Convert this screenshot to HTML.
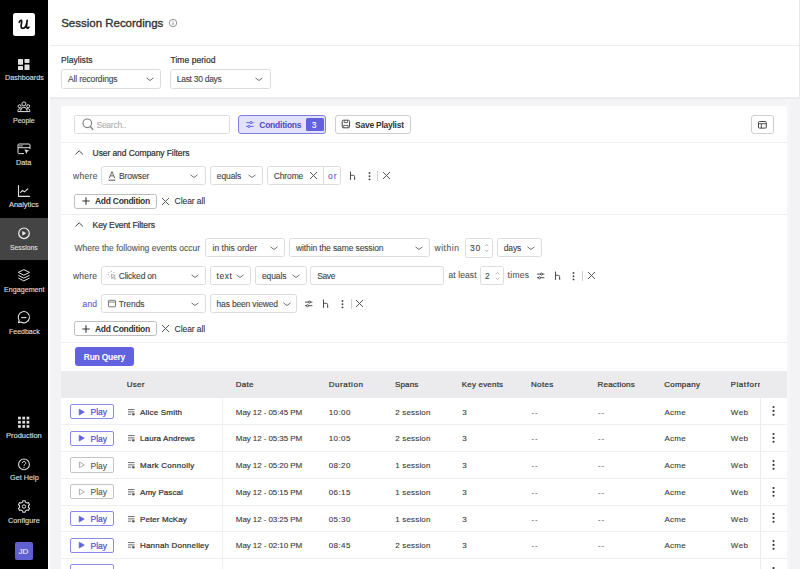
<!DOCTYPE html>
<html><head><meta charset="utf-8"><style>
html,body{margin:0;padding:0;width:800px;height:569px;overflow:hidden;background:#fff}
body{position:relative;font-family:"Liberation Sans", sans-serif}
</style></head><body>
<div style="position:absolute;left:0px;top:0px;width:48px;height:569px;background:#000"></div>
<div style="position:absolute;left:48px;top:0px;width:1.5px;height:569px;background:#fff"></div>
<div style="position:absolute;left:13px;top:13px;width:22px;height:22.5px;background:#fff;border-radius:2.5px"></div>
<svg style="position:absolute;left:13px;top:13px;overflow:visible" width="22" height="22" viewBox="0 0 22 22"><path d="M6.2,9.3 Q7,7.2 8.4,7.4 Q8.9,7.5 8.7,9 L8.1,12.6 Q7.8,15.3 10.2,15.3 Q12.6,15.2 13.6,10.8 L14.2,7.4 L13.6,12.8 Q13.4,15.2 14.6,15.1 Q15.4,15 15.9,14.2" fill="none" stroke="#111" stroke-width="1.65" stroke-linecap="round" stroke-linejoin="round"/></svg>
<div style="position:absolute;left:0px;top:218px;width:47.6px;height:42px;background:#444"></div>
<svg style="position:absolute;left:14px;top:55px;overflow:visible" width="20" height="20" viewBox="0 0 20 20"><g fill="#e2e2e2"><rect x="4" y="3.9" width="5" height="5.9" rx="0.6"/><rect x="10.5" y="3.9" width="5" height="4" rx="0.6"/><rect x="4" y="11" width="5" height="4" rx="0.6"/><rect x="10.5" y="9.5" width="5" height="5.5" rx="0.6"/></g></svg>
<svg style="position:absolute;left:14px;top:98px;overflow:visible" width="20" height="20" viewBox="0 0 20 20"><g fill="none" stroke="#e2e2e2" stroke-width="1"><circle cx="9.9" cy="5.9" r="2"/><circle cx="5.6" cy="8.2" r="1.5"/><circle cx="14.2" cy="8.2" r="1.5"/><path d="M6.8,13.6 v-1.2 a3.1,3.1 0 0 1 6.2,0 v1.2"/><path d="M3.9,13.6 v-1.1 a1.9,1.9 0 0 1 2.9,-1.5"/><path d="M15.9,13.6 v-1.1 a1.9,1.9 0 0 0 -2.9,-1.5"/><path d="M3.9,13.6 H15.9"/></g></svg>
<svg style="position:absolute;left:14px;top:140px;overflow:visible" width="20" height="20" viewBox="0 0 20 20"><g fill="none" stroke="#e2e2e2" stroke-width="1"><path d="M10,13.6 H5 a1,1 0 0 1 -1,-1 V5 a1,1 0 0 1 1,-1 H15 a1,1 0 0 1 1,1 V9"/><path d="M4,7.7 H16"/></g><g fill="#e2e2e2"><rect x="5.3" y="5.3" width="1.3" height="1.2"/><rect x="7.2" y="5.3" width="1.3" height="1.2"/><path d="M10.5,9.3 L15.6,10.8 L13.3,11.6 L12.4,13.9 Z"/></g></svg>
<svg style="position:absolute;left:14px;top:182px;overflow:visible" width="20" height="20" viewBox="0 0 20 20"><g fill="none" stroke="#e2e2e2" stroke-width="1.1" stroke-linecap="round" stroke-linejoin="round"><path d="M4.5,3.5 V14.4 H15.5"/><path d="M6.6,10.4 L8.6,8.4 L10.4,9.9 L13.8,6.8"/></g></svg>
<svg style="position:absolute;left:14px;top:224px;overflow:visible" width="20" height="20" viewBox="0 0 20 20"><circle cx="10" cy="9.3" r="5.3" fill="none" stroke="#f2f2f2" stroke-width="1.2"/><path d="M8.4,7.1 L12.1,9.3 L8.4,11.6 Z" fill="#f2f2f2"/></svg>
<svg style="position:absolute;left:14px;top:266px;overflow:visible" width="20" height="20" viewBox="0 0 20 20"><g fill="none" stroke="#e2e2e2" stroke-width="1" stroke-linejoin="round"><path d="M4.3,6.4 L9.8,3.6 L15.5,6.4 L9.8,9.2 Z"/><path d="M4.3,9.3 L9.8,12.1 L15.5,9.3"/><path d="M4.3,12 L9.8,14.9 L15.5,12"/></g></svg>
<svg style="position:absolute;left:14px;top:308px;overflow:visible" width="20" height="20" viewBox="0 0 20 20"><g fill="none" stroke="#e2e2e2" stroke-width="1.1"><path d="M4.4,14.6 L5.2,12.3 A5.6,5.6 0 1 1 7,14 Z" stroke-linejoin="round"/><path d="M7.2,9.6 H12.4"/></g></svg>
<svg style="position:absolute;left:14px;top:413px;overflow:visible" width="20" height="20" viewBox="0 0 20 20"><g fill="#e2e2e2"><rect x="4.10" y="3.70" width="2.7" height="2.7"/><rect x="8.35" y="3.70" width="2.7" height="2.7"/><rect x="12.60" y="3.70" width="2.7" height="2.7"/><rect x="4.10" y="7.90" width="2.7" height="2.7"/><rect x="8.35" y="7.90" width="2.7" height="2.7"/><rect x="12.60" y="7.90" width="2.7" height="2.7"/><rect x="4.10" y="12.10" width="2.7" height="2.7"/><rect x="8.35" y="12.10" width="2.7" height="2.7"/><rect x="12.60" y="12.10" width="2.7" height="2.7"/></g></svg>
<svg style="position:absolute;left:14px;top:455px;overflow:visible" width="20" height="20" viewBox="0 0 20 20"><circle cx="10" cy="9.4" r="5.4" fill="none" stroke="#e2e2e2" stroke-width="1.05"/><path d="M8.3,8.1 a1.7,1.7 0 1 1 2.5,1.5 c-0.6,0.3 -0.8,0.6 -0.8,1.3" fill="none" stroke="#e2e2e2" stroke-width="1"/><circle cx="10" cy="12.4" r="0.6" fill="#e2e2e2"/></svg>
<svg style="position:absolute;left:14px;top:496px;overflow:visible" width="20" height="20" viewBox="0 0 20 20"><path d="M7.75,6.60 L8.66,6.10 L8.77,4.73 L11.23,4.73 L11.34,6.10 L12.25,6.60 L13.14,7.14 L14.38,6.55 L15.61,8.68 L14.48,9.47 L14.50,10.50 L14.48,11.53 L15.61,12.32 L14.38,14.45 L13.14,13.86 L12.25,14.40 L11.34,14.90 L11.23,16.27 L8.77,16.27 L8.66,14.90 L7.75,14.40 L6.86,13.86 L5.62,14.45 L4.39,12.32 L5.52,11.53 L5.50,10.50 L5.52,9.47 L4.39,8.68 L5.62,6.55 L6.86,7.14 Z" fill="none" stroke="#e2e2e2" stroke-width="1.05" stroke-linejoin="round"/><circle cx="10" cy="10.5" r="1.7" fill="none" stroke="#e2e2e2" stroke-width="1"/></svg>
<div style="position:absolute;left:15px;top:542px;width:18px;height:18px;background:#6060d0;border-radius:2px"></div>
<div style="position:absolute;left:49.5px;top:0px;width:750.5px;height:97.4px;background:#fff"></div>
<div style="position:absolute;left:49.5px;top:45px;width:750.5px;height:1px;background:#efefef"></div>
<div style="position:absolute;left:799px;top:0px;width:1px;height:97.4px;background:#e9e9e9"></div>
<div style="position:absolute;left:49.5px;top:97.4px;width:750.5px;height:471.6px;background:#f3f3f5"></div>
<svg style="position:absolute;left:168px;top:18px;overflow:visible" width="10" height="10" viewBox="0 0 10 10"><circle cx="5" cy="5" r="3.7" fill="none" stroke="#777" stroke-width="0.8"/><path d="M5,4.3 V7.2" stroke="#777" stroke-width="0.9"/><circle cx="5" cy="3.1" r="0.5" fill="#777"/></svg>
<div style="position:absolute;left:60.5px;top:69.0px;width:100.5px;height:19.5px;box-sizing:border-box;border:1px solid #dcdcdc;border-radius:2.5px;background:#fff"></div>
<svg style="position:absolute;left:146px;top:77.05px;overflow:visible" width="8" height="5" viewBox="0 0 8 5"><path d="M0.5,0.9 L4,3.5 L7.5,0.9" fill="none" stroke="#707070" stroke-width="1"/></svg>
<div style="position:absolute;left:170.0px;top:69.0px;width:100.5px;height:19.5px;box-sizing:border-box;border:1px solid #dcdcdc;border-radius:2.5px;background:#fff"></div>
<svg style="position:absolute;left:255px;top:77.05px;overflow:visible" width="8" height="5" viewBox="0 0 8 5"><path d="M0.5,0.9 L4,3.5 L7.5,0.9" fill="none" stroke="#707070" stroke-width="1"/></svg>
<div style="position:absolute;left:61.1px;top:106.0px;width:725.9px;height:494.0px;background:#fff;border-radius:3px"></div>
<div style="position:absolute;left:74.0px;top:114.5px;width:156.0px;height:19.599999999999994px;box-sizing:border-box;border:1px solid #dcdcdc;border-radius:2.5px;background:#fff"></div>
<svg style="position:absolute;left:81px;top:117px;overflow:visible" width="14" height="14" viewBox="0 0 14 14"><circle cx="6.3" cy="6.3" r="4.3" fill="none" stroke="#808080" stroke-width="1.15"/><path d="M9.4,9.5 L11.9,12.5" stroke="#808080" stroke-width="1.2" stroke-linecap="round"/></svg>
<div style="position:absolute;left:238.25px;top:114.5px;width:88.0px;height:19.75px;box-sizing:border-box;border:1px solid #7d7de6;border-radius:3px;background:#e2e2fa"></div>
<svg style="position:absolute;left:245px;top:117.7px;overflow:visible" width="10" height="12" viewBox="0 0 10 12"><g stroke="#6262e0" stroke-width="1" fill="none"><path d="M1.3,4.6 H8.6"/><path d="M1.3,8.4 H8.6"/><circle cx="6" cy="4.6" r="1.1" fill="#e2e2fa"/><circle cx="3.9" cy="8.4" r="1.1" fill="#e2e2fa"/></g></svg>
<div style="position:absolute;left:305.5px;top:117.5px;width:18.25px;height:13.75px;background:#6262e0;border-radius:1.5px"></div>
<div style="position:absolute;left:334.5px;top:114.5px;width:76.5px;height:19.75px;box-sizing:border-box;border:1px solid #cfcfcf;border-radius:3px;background:#fff"></div>
<svg style="position:absolute;left:341px;top:119px;overflow:visible" width="10" height="10" viewBox="0 0 10 10"><rect x="1.2" y="1.2" width="7.4" height="7.6" rx="1.2" fill="none" stroke="#444" stroke-width="1"/><path d="M3.2,1.4 V3.6 H6.6 V1.4" fill="none" stroke="#444" stroke-width="0.8"/><path d="M2.6,8.6 V6.4 H7.2 V8.6" fill="none" stroke="#444" stroke-width="0.8"/></svg>
<div style="position:absolute;left:750.8px;top:114.5px;width:23.200000000000045px;height:19.80000000000001px;box-sizing:border-box;border:1px solid #cfcfcf;border-radius:3px;background:#fff"></div>
<svg style="position:absolute;left:757px;top:119px;overflow:visible" width="11" height="11" viewBox="0 0 11 11"><rect x="1.5" y="2.5" width="7.8" height="6.6" rx="0.9" fill="none" stroke="#444" stroke-width="1"/><path d="M1.5,4.7 H9.3 M4.3,4.7 V9.1" stroke="#444" stroke-width="0.9"/></svg>
<div style="position:absolute;left:61.1px;top:142px;width:725.9px;height:1px;background:#eeeeee"></div>
<svg style="position:absolute;left:75px;top:150px;overflow:visible" width="9" height="5" viewBox="0 0 9 5"><path d="M0.5,4.4 L4.2,0.8 L7.9,4.4" fill="none" stroke="#444" stroke-width="1"/></svg>
<div style="position:absolute;left:100.9px;top:165.9px;width:105.0px;height:19.0px;box-sizing:border-box;border:1px solid #dcdcdc;border-radius:2.5px;background:#fff"></div>
<svg style="position:absolute;left:190.4px;top:173.70000000000002px;overflow:visible" width="8" height="5" viewBox="0 0 8 5"><path d="M0.5,0.9 L4,3.5 L7.5,0.9" fill="none" stroke="#707070" stroke-width="1"/></svg>
<svg style="position:absolute;left:107px;top:170px;overflow:visible" width="10" height="12" viewBox="0 0 10 12"><path d="M2.2,8.3 L5,1.6 L7.8,8.3 M3.3,5.9 H6.7" fill="none" stroke="#555" stroke-width="0.9"/><path d="M1.6,10.2 H8.4" stroke="#555" stroke-width="1"/></svg>
<div style="position:absolute;left:209.5px;top:165.75px;width:53.5px;height:19.25px;box-sizing:border-box;border:1px solid #dcdcdc;border-radius:2.5px;background:#fff"></div>
<svg style="position:absolute;left:248px;top:173.675px;overflow:visible" width="8" height="5" viewBox="0 0 8 5"><path d="M0.5,0.9 L4,3.5 L7.5,0.9" fill="none" stroke="#707070" stroke-width="1"/></svg>
<div style="position:absolute;left:267.0px;top:165.75px;width:74.0px;height:19.25px;box-sizing:border-box;border:1px solid #dcdcdc;border-radius:2.5px;background:#fff"></div>
<div style="position:absolute;left:323px;top:166.25px;width:1px;height:18.25px;background:#dcdcdc"></div>
<svg style="position:absolute;left:309.8px;top:171.6px;overflow:visible" width="7.0" height="7.0" viewBox="0 0 7.0 7.0"><path d="M0,0 L7.0,7.0 M7.0,0 L0,7.0" stroke="#555" stroke-width="1"/></svg>
<svg style="position:absolute;left:348.5px;top:171.2px;overflow:visible" width="8" height="9" viewBox="0 0 8 9"><path d="M1.5,0.9 V8.2 M1.5,4.3 H4.3 a1.3,1.3 0 0 1 1.3,1.3 V8.2" fill="none" stroke="#444" stroke-width="0.95"/><circle cx="1.5" cy="8.1" r="0.75" fill="#444"/><circle cx="5.6" cy="8.1" r="0.75" fill="#444"/><circle cx="1.5" cy="1" r="0.6" fill="#444"/></svg>
<svg style="position:absolute;left:367.7px;top:171.6px;overflow:visible" width="3" height="10" viewBox="0 0 3 10"><g fill="#444"><circle cx="1.5" cy="1" r="0.95"/><circle cx="1.5" cy="4.2" r="0.95"/><circle cx="1.5" cy="7.4" r="0.95"/></g></svg>
<div style="position:absolute;left:377.3px;top:170.5px;width:0.8000000000000114px;height:10.0px;background:#cfcfcf"></div>
<svg style="position:absolute;left:382.8px;top:172px;overflow:visible" width="7.0" height="7" viewBox="0 0 7.0 7"><path d="M0,0 L7.0,7 M7.0,0 L0,7" stroke="#555" stroke-width="1"/></svg>
<div style="position:absolute;left:73.9px;top:193.5px;width:83.19999999999999px;height:15.400000000000006px;box-sizing:border-box;border:1px solid #bdbdbd;border-radius:2.5px;background:#fff"></div>
<svg style="position:absolute;left:81.5px;top:197.2px;overflow:visible" width="8" height="8" viewBox="0 0 8 8"><path d="M4,0.3 V7.7 M0.3,4 H7.7" stroke="#333" stroke-width="1.1"/></svg>
<svg style="position:absolute;left:162.2px;top:197.6px;overflow:visible" width="7.0" height="7.0" viewBox="0 0 7.0 7.0"><path d="M0,0 L7.0,7.0 M7.0,0 L0,7.0" stroke="#555" stroke-width="1"/></svg>
<div style="position:absolute;left:61.1px;top:214px;width:725.9px;height:1px;background:#eeeeee"></div>
<svg style="position:absolute;left:75px;top:222.3px;overflow:visible" width="9" height="5" viewBox="0 0 9 5"><path d="M0.5,4.4 L4.2,0.8 L7.9,4.4" fill="none" stroke="#444" stroke-width="1"/></svg>
<div style="position:absolute;left:205.1px;top:238.25px;width:79.79999999999998px;height:19.0px;box-sizing:border-box;border:1px solid #dcdcdc;border-radius:2.5px;background:#fff"></div>
<svg style="position:absolute;left:270px;top:246.05px;overflow:visible" width="8" height="5" viewBox="0 0 8 5"><path d="M0.5,0.9 L4,3.5 L7.5,0.9" fill="none" stroke="#707070" stroke-width="1"/></svg>
<div style="position:absolute;left:289.2px;top:238.25px;width:141.0px;height:19.0px;box-sizing:border-box;border:1px solid #dcdcdc;border-radius:2.5px;background:#fff"></div>
<svg style="position:absolute;left:415px;top:246.05px;overflow:visible" width="8" height="5" viewBox="0 0 8 5"><path d="M0.5,0.9 L4,3.5 L7.5,0.9" fill="none" stroke="#707070" stroke-width="1"/></svg>
<div style="position:absolute;left:464.8px;top:238.0px;width:28.30000000000001px;height:19.5px;box-sizing:border-box;border:1px solid #dcdcdc;border-radius:2.5px;background:#fff"></div>
<svg style="position:absolute;left:484.1px;top:242.75px;overflow:visible" width="6" height="10" viewBox="0 0 6 10"><path d="M0.8,3.3 L2.6,1.4 L4.4,3.3 M0.8,6.7 L2.6,8.6 L4.4,6.7" fill="none" stroke="#aaa" stroke-width="0.8"/></svg>
<div style="position:absolute;left:496.5px;top:238.25px;width:45.39999999999998px;height:19.0px;box-sizing:border-box;border:1px solid #dcdcdc;border-radius:2.5px;background:#fff"></div>
<svg style="position:absolute;left:526.9px;top:246.05px;overflow:visible" width="8" height="5" viewBox="0 0 8 5"><path d="M0.5,0.9 L4,3.5 L7.5,0.9" fill="none" stroke="#707070" stroke-width="1"/></svg>
<div style="position:absolute;left:100.75px;top:266.25px;width:105.25px;height:18.75px;box-sizing:border-box;border:1px solid #dcdcdc;border-radius:2.5px;background:#fff"></div>
<svg style="position:absolute;left:190.5px;top:273.925px;overflow:visible" width="8" height="5" viewBox="0 0 8 5"><path d="M0.5,0.9 L4,3.5 L7.5,0.9" fill="none" stroke="#707070" stroke-width="1"/></svg>
<svg style="position:absolute;left:107px;top:270px;overflow:visible" width="10" height="11" viewBox="0 0 10 11"><g fill="none" stroke="#999" stroke-width="0.8"><path d="M4.3,4.2 L8.3,5.6 L6.6,6.4 L8.4,8.6 L7.6,9.3 L5.8,7.2 L4.9,8.7 Z"/><path d="M4.4,0.8 V2 M1.6,2.2 L2.4,3 M0.8,4.6 H2 M7.2,2.2 L6.4,3 M1.8,7.2 L2.6,6.4"/></g></svg>
<div style="position:absolute;left:209.8px;top:266.25px;width:41.29999999999998px;height:18.75px;box-sizing:border-box;border:1px solid #dcdcdc;border-radius:2.5px;background:#fff"></div>
<svg style="position:absolute;left:236.3px;top:273.925px;overflow:visible" width="8" height="5" viewBox="0 0 8 5"><path d="M0.5,0.9 L4,3.5 L7.5,0.9" fill="none" stroke="#707070" stroke-width="1"/></svg>
<div style="position:absolute;left:255.1px;top:266.25px;width:51.650000000000006px;height:18.75px;box-sizing:border-box;border:1px solid #dcdcdc;border-radius:2.5px;background:#fff"></div>
<svg style="position:absolute;left:291.6px;top:273.925px;overflow:visible" width="8" height="5" viewBox="0 0 8 5"><path d="M0.5,0.9 L4,3.5 L7.5,0.9" fill="none" stroke="#707070" stroke-width="1"/></svg>
<div style="position:absolute;left:309.8px;top:266.25px;width:133.8px;height:18.75px;box-sizing:border-box;border:1px solid #dcdcdc;border-radius:2.5px;background:#fff"></div>
<div style="position:absolute;left:480.1px;top:266.0px;width:23.5px;height:19.0px;box-sizing:border-box;border:1px solid #dcdcdc;border-radius:2.5px;background:#fff"></div>
<svg style="position:absolute;left:494.6px;top:270.5px;overflow:visible" width="6" height="10" viewBox="0 0 6 10"><path d="M0.8,3.3 L2.6,1.4 L4.4,3.3 M0.8,6.7 L2.6,8.6 L4.4,6.7" fill="none" stroke="#aaa" stroke-width="0.8"/></svg>
<svg style="position:absolute;left:536px;top:271.7px;overflow:visible" width="10" height="8" viewBox="0 0 10 8"><g stroke="#444" stroke-width="0.95" fill="none"><path d="M1,2.1 H8.4"/><path d="M1,5.7 H8.4"/><circle cx="5.5" cy="2.1" r="1.05" fill="#fff"/><circle cx="3.5" cy="5.7" r="1.05" fill="#fff"/></g></svg>
<svg style="position:absolute;left:554px;top:271px;overflow:visible" width="8" height="9" viewBox="0 0 8 9"><path d="M1.5,0.9 V8.2 M1.5,4.3 H4.3 a1.3,1.3 0 0 1 1.3,1.3 V8.2" fill="none" stroke="#444" stroke-width="0.95"/><circle cx="1.5" cy="8.1" r="0.75" fill="#444"/><circle cx="5.6" cy="8.1" r="0.75" fill="#444"/><circle cx="1.5" cy="1" r="0.6" fill="#444"/></svg>
<svg style="position:absolute;left:572.3px;top:271.6px;overflow:visible" width="3" height="10" viewBox="0 0 3 10"><g fill="#444"><circle cx="1.5" cy="1" r="0.95"/><circle cx="1.5" cy="4.2" r="0.95"/><circle cx="1.5" cy="7.4" r="0.95"/></g></svg>
<div style="position:absolute;left:582.4px;top:270.5px;width:0.7999999999999545px;height:10.0px;background:#cfcfcf"></div>
<svg style="position:absolute;left:587.7px;top:272px;overflow:visible" width="7.0" height="7" viewBox="0 0 7.0 7"><path d="M0,0 L7.0,7 M7.0,0 L0,7" stroke="#555" stroke-width="1"/></svg>
<div style="position:absolute;left:100.75px;top:293.75px;width:105.25px;height:19.25px;box-sizing:border-box;border:1px solid #dcdcdc;border-radius:2.5px;background:#fff"></div>
<svg style="position:absolute;left:190.5px;top:301.675px;overflow:visible" width="8" height="5" viewBox="0 0 8 5"><path d="M0.5,0.9 L4,3.5 L7.5,0.9" fill="none" stroke="#707070" stroke-width="1"/></svg>
<svg style="position:absolute;left:107px;top:298px;overflow:visible" width="11" height="11" viewBox="0 0 11 11"><rect x="1.5" y="2.3" width="7" height="6.5" rx="0.6" fill="none" stroke="#7a7a7a" stroke-width="1"/><path d="M1.5,4.1 H8.5" stroke="#7a7a7a" stroke-width="0.9"/></svg>
<div style="position:absolute;left:209.8px;top:293.75px;width:87.59999999999997px;height:19.25px;box-sizing:border-box;border:1px solid #dcdcdc;border-radius:2.5px;background:#fff"></div>
<svg style="position:absolute;left:282.8px;top:301.675px;overflow:visible" width="8" height="5" viewBox="0 0 8 5"><path d="M0.5,0.9 L4,3.5 L7.5,0.9" fill="none" stroke="#707070" stroke-width="1"/></svg>
<svg style="position:absolute;left:304.3px;top:299.7px;overflow:visible" width="10" height="8" viewBox="0 0 10 8"><g stroke="#444" stroke-width="0.95" fill="none"><path d="M1,2.1 H8.4"/><path d="M1,5.7 H8.4"/><circle cx="5.5" cy="2.1" r="1.05" fill="#fff"/><circle cx="3.5" cy="5.7" r="1.05" fill="#fff"/></g></svg>
<svg style="position:absolute;left:322px;top:299px;overflow:visible" width="8" height="9" viewBox="0 0 8 9"><path d="M1.5,0.9 V8.2 M1.5,4.3 H4.3 a1.3,1.3 0 0 1 1.3,1.3 V8.2" fill="none" stroke="#444" stroke-width="0.95"/><circle cx="1.5" cy="8.1" r="0.75" fill="#444"/><circle cx="5.6" cy="8.1" r="0.75" fill="#444"/><circle cx="1.5" cy="1" r="0.6" fill="#444"/></svg>
<svg style="position:absolute;left:340.9px;top:299.6px;overflow:visible" width="3" height="10" viewBox="0 0 3 10"><g fill="#444"><circle cx="1.5" cy="1" r="0.95"/><circle cx="1.5" cy="4.2" r="0.95"/><circle cx="1.5" cy="7.4" r="0.95"/></g></svg>
<div style="position:absolute;left:350.8px;top:298.5px;width:0.8000000000000114px;height:10.0px;background:#cfcfcf"></div>
<svg style="position:absolute;left:356.3px;top:300px;overflow:visible" width="7.0" height="7" viewBox="0 0 7.0 7"><path d="M0,0 L7.0,7 M7.0,0 L0,7" stroke="#555" stroke-width="1"/></svg>
<div style="position:absolute;left:73.9px;top:321.0px;width:83.19999999999999px;height:15.300000000000011px;box-sizing:border-box;border:1px solid #bdbdbd;border-radius:2.5px;background:#fff"></div>
<svg style="position:absolute;left:81.5px;top:324.65px;overflow:visible" width="8" height="8" viewBox="0 0 8 8"><path d="M4,0.3 V7.7 M0.3,4 H7.7" stroke="#333" stroke-width="1.1"/></svg>
<svg style="position:absolute;left:162.2px;top:325.04999999999995px;overflow:visible" width="7.0" height="7.0" viewBox="0 0 7.0 7.0"><path d="M0,0 L7.0,7.0 M7.0,0 L0,7.0" stroke="#555" stroke-width="1"/></svg>
<div style="position:absolute;left:61.1px;top:342px;width:725.9px;height:1px;background:#eeeeee"></div>
<div style="position:absolute;left:74.5px;top:347px;width:59.25px;height:19px;background:#6262e0;border-radius:3px"></div>
<div style="position:absolute;left:61.1px;top:370.5px;width:725.9px;height:27.5px;background:#ebebed"></div>
<div style="position:absolute;left:61.1px;top:424.25px;width:725.9px;height:1.0px;background:#efefef"></div>
<div style="position:absolute;left:69.5px;top:403.8px;width:44.7px;height:15.300000000000011px;box-sizing:border-box;border:1px solid #8a8aea;border-radius:2px;background:#fff"></div>
<svg style="position:absolute;left:77.5px;top:407.6px;overflow:visible" width="8" height="8" viewBox="0 0 8 8"><path d="M1.2,1.2 L6.3,4.1 L1.2,7.1 Z" fill="#6262e0" stroke="#6262e0" stroke-width="0.7" stroke-linejoin="round"/></svg>
<svg style="position:absolute;left:127.8px;top:408.6px;overflow:visible" width="8" height="8" viewBox="0 0 8 8"><g stroke="#444" stroke-width="0.8"><path d="M0,0.6 H6.5 M0,2.9 H6.5 M0,5.2 H3.2"/></g><rect x="4.2" y="4.3" width="2.3" height="2" fill="#444"/></svg>
<div style="position:absolute;left:61.1px;top:451.0px;width:725.9px;height:1.0px;background:#efefef"></div>
<div style="position:absolute;left:69.5px;top:430.55px;width:44.7px;height:15.300000000000011px;box-sizing:border-box;border:1px solid #8a8aea;border-radius:2px;background:#fff"></div>
<svg style="position:absolute;left:77.5px;top:434.35px;overflow:visible" width="8" height="8" viewBox="0 0 8 8"><path d="M1.2,1.2 L6.3,4.1 L1.2,7.1 Z" fill="#6262e0" stroke="#6262e0" stroke-width="0.7" stroke-linejoin="round"/></svg>
<svg style="position:absolute;left:127.8px;top:435.35px;overflow:visible" width="8" height="8" viewBox="0 0 8 8"><g stroke="#444" stroke-width="0.8"><path d="M0,0.6 H6.5 M0,2.9 H6.5 M0,5.2 H3.2"/></g><rect x="4.2" y="4.3" width="2.3" height="2" fill="#444"/></svg>
<div style="position:absolute;left:61.1px;top:477.75px;width:725.9px;height:1.0px;background:#efefef"></div>
<div style="position:absolute;left:69.5px;top:457.3px;width:44.7px;height:15.300000000000011px;box-sizing:border-box;border:1px solid #c4c4c4;border-radius:2px;background:#fff"></div>
<svg style="position:absolute;left:77.5px;top:461.1px;overflow:visible" width="8" height="8" viewBox="0 0 8 8"><path d="M1.4,1 L6.4,3.9 L1.4,6.8 Z" fill="none" stroke="#999" stroke-width="0.8"/></svg>
<svg style="position:absolute;left:127.8px;top:462.1px;overflow:visible" width="8" height="8" viewBox="0 0 8 8"><g stroke="#444" stroke-width="0.8"><path d="M0,0.6 H6.5 M0,2.9 H6.5 M0,5.2 H3.2"/></g><rect x="4.2" y="4.3" width="2.3" height="2" fill="#444"/></svg>
<div style="position:absolute;left:61.1px;top:504.5px;width:725.9px;height:1.0px;background:#efefef"></div>
<div style="position:absolute;left:69.5px;top:484.05px;width:44.7px;height:15.300000000000011px;box-sizing:border-box;border:1px solid #c4c4c4;border-radius:2px;background:#fff"></div>
<svg style="position:absolute;left:77.5px;top:487.85px;overflow:visible" width="8" height="8" viewBox="0 0 8 8"><path d="M1.4,1 L6.4,3.9 L1.4,6.8 Z" fill="none" stroke="#999" stroke-width="0.8"/></svg>
<svg style="position:absolute;left:127.8px;top:488.85px;overflow:visible" width="8" height="8" viewBox="0 0 8 8"><g stroke="#444" stroke-width="0.8"><path d="M0,0.6 H6.5 M0,2.9 H6.5 M0,5.2 H3.2"/></g><rect x="4.2" y="4.3" width="2.3" height="2" fill="#444"/></svg>
<div style="position:absolute;left:61.1px;top:531.25px;width:725.9px;height:1.0px;background:#efefef"></div>
<div style="position:absolute;left:69.5px;top:510.8px;width:44.7px;height:15.300000000000011px;box-sizing:border-box;border:1px solid #8a8aea;border-radius:2px;background:#fff"></div>
<svg style="position:absolute;left:77.5px;top:514.6px;overflow:visible" width="8" height="8" viewBox="0 0 8 8"><path d="M1.2,1.2 L6.3,4.1 L1.2,7.1 Z" fill="#6262e0" stroke="#6262e0" stroke-width="0.7" stroke-linejoin="round"/></svg>
<svg style="position:absolute;left:127.8px;top:515.6px;overflow:visible" width="8" height="8" viewBox="0 0 8 8"><g stroke="#444" stroke-width="0.8"><path d="M0,0.6 H6.5 M0,2.9 H6.5 M0,5.2 H3.2"/></g><rect x="4.2" y="4.3" width="2.3" height="2" fill="#444"/></svg>
<div style="position:absolute;left:61.1px;top:558.0px;width:725.9px;height:1.0px;background:#efefef"></div>
<div style="position:absolute;left:69.5px;top:537.55px;width:44.7px;height:15.299999999999955px;box-sizing:border-box;border:1px solid #8a8aea;border-radius:2px;background:#fff"></div>
<svg style="position:absolute;left:77.5px;top:541.3499999999999px;overflow:visible" width="8" height="8" viewBox="0 0 8 8"><path d="M1.2,1.2 L6.3,4.1 L1.2,7.1 Z" fill="#6262e0" stroke="#6262e0" stroke-width="0.7" stroke-linejoin="round"/></svg>
<svg style="position:absolute;left:127.8px;top:542.35px;overflow:visible" width="8" height="8" viewBox="0 0 8 8"><g stroke="#444" stroke-width="0.8"><path d="M0,0.6 H6.5 M0,2.9 H6.5 M0,5.2 H3.2"/></g><rect x="4.2" y="4.3" width="2.3" height="2" fill="#444"/></svg>
<div style="position:absolute;left:61.1px;top:584.75px;width:725.9px;height:1.0px;background:#efefef"></div>
<div style="position:absolute;left:69.5px;top:564.3px;width:44.7px;height:15.299999999999955px;box-sizing:border-box;border:1px solid #8a8aea;border-radius:2px;background:#fff"></div>
<svg style="position:absolute;left:77.5px;top:568.0999999999999px;overflow:visible" width="8" height="8" viewBox="0 0 8 8"><path d="M1.2,1.2 L6.3,4.1 L1.2,7.1 Z" fill="#6262e0" stroke="#6262e0" stroke-width="0.7" stroke-linejoin="round"/></svg>
<svg style="position:absolute;left:127.8px;top:569.1px;overflow:visible" width="8" height="8" viewBox="0 0 8 8"><g stroke="#444" stroke-width="0.8"><path d="M0,0.6 H6.5 M0,2.9 H6.5 M0,5.2 H3.2"/></g><rect x="4.2" y="4.3" width="2.3" height="2" fill="#444"/></svg>
<div style="position:absolute;left:221.7px;top:398px;width:1.0px;height:171px;background:#efefef"></div>
<div style="position:absolute;left:760px;top:398px;width:27px;height:171px;background:#fff"></div>
<div style="position:absolute;left:760px;top:398px;width:1px;height:171px;background:#ececec"></div>
<div style="position:absolute;left:760px;top:424.25px;width:27px;height:1.0px;background:#efefef"></div>
<svg style="position:absolute;left:771.8px;top:406.4px;overflow:visible" width="3" height="10" viewBox="0 0 3 10"><g fill="#333"><circle cx="1.5" cy="1" r="1.05"/><circle cx="1.5" cy="4.9" r="1.05"/><circle cx="1.5" cy="8.8" r="1.05"/></g></svg>
<div style="position:absolute;left:760px;top:451.0px;width:27px;height:1.0px;background:#efefef"></div>
<svg style="position:absolute;left:771.8px;top:433.15px;overflow:visible" width="3" height="10" viewBox="0 0 3 10"><g fill="#333"><circle cx="1.5" cy="1" r="1.05"/><circle cx="1.5" cy="4.9" r="1.05"/><circle cx="1.5" cy="8.8" r="1.05"/></g></svg>
<div style="position:absolute;left:760px;top:477.75px;width:27px;height:1.0px;background:#efefef"></div>
<svg style="position:absolute;left:771.8px;top:459.9px;overflow:visible" width="3" height="10" viewBox="0 0 3 10"><g fill="#333"><circle cx="1.5" cy="1" r="1.05"/><circle cx="1.5" cy="4.9" r="1.05"/><circle cx="1.5" cy="8.8" r="1.05"/></g></svg>
<div style="position:absolute;left:760px;top:504.5px;width:27px;height:1.0px;background:#efefef"></div>
<svg style="position:absolute;left:771.8px;top:486.65px;overflow:visible" width="3" height="10" viewBox="0 0 3 10"><g fill="#333"><circle cx="1.5" cy="1" r="1.05"/><circle cx="1.5" cy="4.9" r="1.05"/><circle cx="1.5" cy="8.8" r="1.05"/></g></svg>
<div style="position:absolute;left:760px;top:531.25px;width:27px;height:1.0px;background:#efefef"></div>
<svg style="position:absolute;left:771.8px;top:513.4px;overflow:visible" width="3" height="10" viewBox="0 0 3 10"><g fill="#333"><circle cx="1.5" cy="1" r="1.05"/><circle cx="1.5" cy="4.9" r="1.05"/><circle cx="1.5" cy="8.8" r="1.05"/></g></svg>
<div style="position:absolute;left:760px;top:558.0px;width:27px;height:1.0px;background:#efefef"></div>
<svg style="position:absolute;left:771.8px;top:540.15px;overflow:visible" width="3" height="10" viewBox="0 0 3 10"><g fill="#333"><circle cx="1.5" cy="1" r="1.05"/><circle cx="1.5" cy="4.9" r="1.05"/><circle cx="1.5" cy="8.8" r="1.05"/></g></svg>
<div style="position:absolute;left:760px;top:584.75px;width:27px;height:1.0px;background:#efefef"></div>
<svg style="position:absolute;left:771.8px;top:566.9px;overflow:visible" width="3" height="10" viewBox="0 0 3 10"><g fill="#333"><circle cx="1.5" cy="1" r="1.05"/><circle cx="1.5" cy="4.9" r="1.05"/><circle cx="1.5" cy="8.8" r="1.05"/></g></svg>
<div style="position:absolute;left:787px;top:97.4px;width:13px;height:471.6px;background:#f3f3f5"></div>
<div style="position:absolute;left:787px;top:97.4px;width:3px;height:471.6px;background:#f6f6f8"></div>
<div style="position:absolute;left:49.5px;top:97.2px;width:750.5px;height:1.3999999999999915px;background:#ebebed"></div>
<div id="t0" style="position:absolute;left:4.70px;top:74.40px;font-size:7.8px;line-height:7.8px;font-weight:400;color:#e0e0e0;white-space:nowrap;transform:scaleX(0.9212);transform-origin:0 0;-webkit-text-stroke:0.1px #e0e0e0;">Dashboards</div>
<div id="t1" style="position:absolute;left:13.20px;top:116.80px;font-size:7.8px;line-height:7.8px;font-weight:400;color:#e0e0e0;white-space:nowrap;transform:scaleX(0.8951);transform-origin:0 0;-webkit-text-stroke:0.1px #e0e0e0;">People</div>
<div id="t2" style="position:absolute;left:16.35px;top:158.60px;font-size:7.8px;line-height:7.8px;font-weight:400;color:#e0e0e0;white-space:nowrap;transform:scaleX(0.9363);transform-origin:0 0;-webkit-text-stroke:0.1px #e0e0e0;">Data</div>
<div id="t3" style="position:absolute;left:9.20px;top:200.80px;font-size:7.8px;line-height:7.8px;font-weight:400;color:#e0e0e0;white-space:nowrap;transform:scaleX(0.9529);transform-origin:0 0;-webkit-text-stroke:0.1px #e0e0e0;">Analytics</div>
<div id="t4" style="position:absolute;left:10.20px;top:243.50px;font-size:7.8px;line-height:7.8px;font-weight:400;color:#e0e0e0;white-space:nowrap;transform:scaleX(0.8765);transform-origin:0 0;-webkit-text-stroke:0.1px #e0e0e0;">Sessions</div>
<div id="t5" style="position:absolute;left:3.80px;top:285.60px;font-size:7.8px;line-height:7.8px;font-weight:400;color:#e0e0e0;white-space:nowrap;transform:scaleX(0.9167);transform-origin:0 0;-webkit-text-stroke:0.1px #e0e0e0;">Engagement</div>
<div id="t6" style="position:absolute;left:8.70px;top:327.60px;font-size:7.8px;line-height:7.8px;font-weight:400;color:#e0e0e0;white-space:nowrap;transform:scaleX(0.8973);transform-origin:0 0;-webkit-text-stroke:0.1px #e0e0e0;">Feedback</div>
<div id="t7" style="position:absolute;left:6.20px;top:432.10px;font-size:7.8px;line-height:7.8px;font-weight:400;color:#e0e0e0;white-space:nowrap;transform:scaleX(0.9585);transform-origin:0 0;-webkit-text-stroke:0.1px #e0e0e0;">Production</div>
<div id="t8" style="position:absolute;left:9.70px;top:474.20px;font-size:7.8px;line-height:7.8px;font-weight:400;color:#e0e0e0;white-space:nowrap;transform:scaleX(0.9335);transform-origin:0 0;-webkit-text-stroke:0.1px #e0e0e0;">Get Help</div>
<div id="t9" style="position:absolute;left:8.20px;top:516.80px;font-size:7.8px;line-height:7.8px;font-weight:400;color:#e0e0e0;white-space:nowrap;transform:scaleX(0.9385);transform-origin:0 0;-webkit-text-stroke:0.1px #e0e0e0;">Configure</div>
<div id="t10" style="position:absolute;left:18.60px;top:547.63px;font-size:8px;line-height:8px;font-weight:400;color:#f4f4ff;white-space:nowrap;-webkit-text-stroke:0.1px #f4f4ff;">JD</div>
<div id="t11" style="position:absolute;left:61.20px;top:18.07px;font-size:11.5px;line-height:11.5px;font-weight:400;color:#333;white-space:nowrap;letter-spacing:-0.012px;-webkit-text-stroke:0.346px #333;">Session Recordings</div>
<div id="t12" style="position:absolute;left:61.00px;top:56.20px;font-size:8.5px;line-height:8.5px;font-weight:400;color:#333;white-space:nowrap;letter-spacing:0.045px;-webkit-text-stroke:0.220px #333;">Playlists</div>
<div id="t13" style="position:absolute;left:170.50px;top:56.20px;font-size:8.5px;line-height:8.5px;font-weight:400;color:#333;white-space:nowrap;letter-spacing:0.047px;-webkit-text-stroke:0.220px #333;">Time period</div>
<div id="t14" style="position:absolute;left:68.00px;top:74.95px;font-size:8.5px;line-height:8.5px;font-weight:400;color:#444;white-space:nowrap;letter-spacing:-0.150px;-webkit-text-stroke:0.1px #444;">All recordings</div>
<div id="t15" style="position:absolute;left:176.75px;top:74.95px;font-size:8.5px;line-height:8.5px;font-weight:400;color:#444;white-space:nowrap;letter-spacing:-0.287px;-webkit-text-stroke:0.1px #444;">Last 30 days</div>
<div id="t16" style="position:absolute;left:96.50px;top:120.80px;font-size:8.5px;line-height:8.5px;font-weight:400;color:#b0b0b0;white-space:nowrap;letter-spacing:-0.265px;-webkit-text-stroke:0.1px #b0b0b0;">Search..</div>
<div id="t17" style="position:absolute;left:259.25px;top:121.00px;font-size:8.5px;line-height:8.5px;font-weight:700;color:#4a4ac4;white-space:nowrap;letter-spacing:-0.232px;">Conditions</div>
<div id="t18" style="position:absolute;left:311.80px;top:121.10px;font-size:8.5px;line-height:8.5px;font-weight:400;color:#fff;white-space:nowrap;-webkit-text-stroke:0.1px #fff;">3</div>
<div id="t19" style="position:absolute;left:355.00px;top:121.00px;font-size:8.5px;line-height:8.5px;font-weight:700;color:#333;white-space:nowrap;letter-spacing:-0.245px;">Save Playlist</div>
<div id="t20" style="position:absolute;left:92.60px;top:148.80px;font-size:8.5px;line-height:8.5px;font-weight:400;color:#333;white-space:nowrap;letter-spacing:-0.084px;-webkit-text-stroke:0.220px #333;">User and Company Filters</div>
<div id="t21" style="position:absolute;left:73.00px;top:172.10px;font-size:8.5px;line-height:8.5px;font-weight:400;color:#555;white-space:nowrap;letter-spacing:0.311px;-webkit-text-stroke:0.1px #555;">where</div>
<div id="t22" style="position:absolute;left:119.00px;top:171.60px;font-size:8.5px;line-height:8.5px;font-weight:400;color:#444;white-space:nowrap;letter-spacing:-0.131px;-webkit-text-stroke:0.1px #444;">Browser</div>
<div id="t23" style="position:absolute;left:216.75px;top:171.58px;font-size:8.5px;line-height:8.5px;font-weight:400;color:#444;white-space:nowrap;letter-spacing:-0.102px;-webkit-text-stroke:0.1px #444;">equals</div>
<div id="t24" style="position:absolute;left:273.75px;top:171.80px;font-size:8.5px;line-height:8.5px;font-weight:400;color:#444;white-space:nowrap;letter-spacing:-0.137px;-webkit-text-stroke:0.1px #444;">Chrome</div>
<div id="t25" style="position:absolute;left:328.00px;top:171.80px;font-size:8.5px;line-height:8.5px;font-weight:400;color:#5a5ad6;white-space:nowrap;letter-spacing:0.988px;-webkit-text-stroke:0.1px #5a5ad6;">or</div>
<div id="t26" style="position:absolute;left:95.00px;top:197.40px;font-size:8.5px;line-height:8.5px;font-weight:700;color:#333;white-space:nowrap;letter-spacing:-0.279px;">Add Condition</div>
<div id="t27" style="position:absolute;left:174.60px;top:197.40px;font-size:8.5px;line-height:8.5px;font-weight:400;color:#333;white-space:nowrap;letter-spacing:-0.073px;-webkit-text-stroke:0.1px #333;">Clear all</div>
<div id="t28" style="position:absolute;left:92.60px;top:221.20px;font-size:8.5px;line-height:8.5px;font-weight:400;color:#333;white-space:nowrap;letter-spacing:-0.122px;-webkit-text-stroke:0.220px #333;">Key Event Filters</div>
<div id="t29" style="position:absolute;left:74.50px;top:243.70px;font-size:8.5px;line-height:8.5px;font-weight:400;color:#555;white-space:nowrap;letter-spacing:0.011px;-webkit-text-stroke:0.1px #555;">Where the following events occur</div>
<div id="t30" style="position:absolute;left:212.50px;top:243.95px;font-size:8.5px;line-height:8.5px;font-weight:400;color:#444;white-space:nowrap;letter-spacing:0.011px;-webkit-text-stroke:0.1px #444;">in this order</div>
<div id="t31" style="position:absolute;left:296.00px;top:243.95px;font-size:8.5px;line-height:8.5px;font-weight:400;color:#444;white-space:nowrap;letter-spacing:-0.120px;-webkit-text-stroke:0.1px #444;">within the same session</div>
<div id="t32" style="position:absolute;left:434.50px;top:243.70px;font-size:8.5px;line-height:8.5px;font-weight:400;color:#555;white-space:nowrap;letter-spacing:0.533px;-webkit-text-stroke:0.1px #555;">within</div>
<div id="t33" style="position:absolute;left:470.00px;top:243.95px;font-size:8.5px;line-height:8.5px;font-weight:400;color:#444;white-space:nowrap;letter-spacing:0.831px;-webkit-text-stroke:0.1px #444;">30</div>
<div id="t34" style="position:absolute;left:503.80px;top:243.95px;font-size:8.5px;line-height:8.5px;font-weight:400;color:#444;white-space:nowrap;letter-spacing:-0.156px;-webkit-text-stroke:0.1px #444;">days</div>
<div id="t35" style="position:absolute;left:73.00px;top:271.90px;font-size:8.5px;line-height:8.5px;font-weight:400;color:#555;white-space:nowrap;letter-spacing:0.223px;-webkit-text-stroke:0.1px #555;">where</div>
<div id="t36" style="position:absolute;left:118.75px;top:271.83px;font-size:8.5px;line-height:8.5px;font-weight:400;color:#444;white-space:nowrap;letter-spacing:-0.210px;-webkit-text-stroke:0.1px #444;">Clicked on</div>
<div id="t37" style="position:absolute;left:216.50px;top:271.83px;font-size:8.5px;line-height:8.5px;font-weight:400;color:#444;white-space:nowrap;letter-spacing:0.532px;-webkit-text-stroke:0.1px #444;">text</div>
<div id="t38" style="position:absolute;left:261.90px;top:271.83px;font-size:8.5px;line-height:8.5px;font-weight:400;color:#444;white-space:nowrap;letter-spacing:-0.102px;-webkit-text-stroke:0.1px #444;">equals</div>
<div id="t39" style="position:absolute;left:317.20px;top:271.80px;font-size:8.5px;line-height:8.5px;font-weight:400;color:#444;white-space:nowrap;letter-spacing:-0.358px;-webkit-text-stroke:0.1px #444;">Save</div>
<div id="t40" style="position:absolute;left:448.50px;top:271.45px;font-size:8.5px;line-height:8.5px;font-weight:400;color:#555;white-space:nowrap;letter-spacing:0.085px;-webkit-text-stroke:0.1px #555;">at least</div>
<div id="t41" style="position:absolute;left:485.00px;top:271.70px;font-size:8.5px;line-height:8.5px;font-weight:400;color:#444;white-space:nowrap;letter-spacing:0.000px;-webkit-text-stroke:0.1px #444;">2</div>
<div id="t42" style="position:absolute;left:507.60px;top:271.45px;font-size:8.5px;line-height:8.5px;font-weight:400;color:#555;white-space:nowrap;letter-spacing:0.297px;-webkit-text-stroke:0.1px #555;">times</div>
<div id="t43" style="position:absolute;left:82.50px;top:299.50px;font-size:8.5px;line-height:8.5px;font-weight:400;color:#5a5ad6;white-space:nowrap;letter-spacing:0.181px;-webkit-text-stroke:0.1px #5a5ad6;">and</div>
<div id="t44" style="position:absolute;left:118.75px;top:299.58px;font-size:8.5px;line-height:8.5px;font-weight:400;color:#444;white-space:nowrap;letter-spacing:-0.068px;-webkit-text-stroke:0.1px #444;">Trends</div>
<div id="t45" style="position:absolute;left:216.50px;top:299.58px;font-size:8.5px;line-height:8.5px;font-weight:400;color:#444;white-space:nowrap;letter-spacing:-0.164px;-webkit-text-stroke:0.1px #444;">has been viewed</div>
<div id="t46" style="position:absolute;left:95.00px;top:324.85px;font-size:8.5px;line-height:8.5px;font-weight:700;color:#333;white-space:nowrap;letter-spacing:-0.279px;">Add Condition</div>
<div id="t47" style="position:absolute;left:174.60px;top:324.85px;font-size:8.5px;line-height:8.5px;font-weight:400;color:#333;white-space:nowrap;letter-spacing:-0.073px;-webkit-text-stroke:0.1px #333;">Clear all</div>
<div id="t48" style="position:absolute;left:83.75px;top:353.10px;font-size:8.5px;line-height:8.5px;font-weight:700;color:#fff;white-space:nowrap;letter-spacing:-0.238px;">Run Query</div>
<div id="t49" style="position:absolute;left:126.75px;top:381.13px;font-size:8px;line-height:8px;font-weight:400;color:#333;white-space:nowrap;letter-spacing:0.287px;-webkit-text-stroke:0.220px #333;">User</div>
<div id="t50" style="position:absolute;left:235.70px;top:381.13px;font-size:8px;line-height:8px;font-weight:400;color:#333;white-space:nowrap;letter-spacing:0.282px;-webkit-text-stroke:0.220px #333;">Date</div>
<div id="t51" style="position:absolute;left:328.70px;top:381.13px;font-size:8px;line-height:8px;font-weight:400;color:#333;white-space:nowrap;letter-spacing:0.572px;-webkit-text-stroke:0.220px #333;">Duration</div>
<div id="t52" style="position:absolute;left:395.00px;top:381.13px;font-size:8px;line-height:8px;font-weight:400;color:#333;white-space:nowrap;letter-spacing:0.141px;-webkit-text-stroke:0.220px #333;">Spans</div>
<div id="t53" style="position:absolute;left:461.80px;top:381.13px;font-size:8px;line-height:8px;font-weight:400;color:#333;white-space:nowrap;letter-spacing:0.186px;-webkit-text-stroke:0.220px #333;">Key events</div>
<div id="t54" style="position:absolute;left:531.00px;top:381.13px;font-size:8px;line-height:8px;font-weight:400;color:#333;white-space:nowrap;letter-spacing:0.337px;-webkit-text-stroke:0.220px #333;">Notes</div>
<div id="t55" style="position:absolute;left:597.50px;top:381.13px;font-size:8px;line-height:8px;font-weight:400;color:#333;white-space:nowrap;letter-spacing:0.209px;-webkit-text-stroke:0.220px #333;">Reactions</div>
<div id="t56" style="position:absolute;left:664.20px;top:381.13px;font-size:8px;line-height:8px;font-weight:400;color:#333;white-space:nowrap;letter-spacing:0.250px;-webkit-text-stroke:0.220px #333;">Company</div>
<div id="t57" style="position:absolute;left:730.60px;top:381.13px;font-size:8px;line-height:8px;font-weight:400;color:#333;white-space:nowrap;letter-spacing:0.565px;-webkit-text-stroke:0.220px #333;width:29.4px;overflow:hidden;">Platform</div>
<div id="t58" style="position:absolute;left:90.50px;top:408.20px;font-size:8.5px;line-height:8.5px;font-weight:400;color:#5050cc;white-space:nowrap;letter-spacing:0.018px;-webkit-text-stroke:0.220px #5050cc;">Play</div>
<div id="t59" style="position:absolute;left:140.00px;top:408.63px;font-size:8px;line-height:8px;font-weight:400;color:#333;white-space:nowrap;letter-spacing:0.199px;-webkit-text-stroke:0.220px #333;">Alice Smith</div>
<div id="t60" style="position:absolute;left:235.80px;top:408.63px;font-size:8px;line-height:8px;font-weight:400;color:#383838;white-space:nowrap;letter-spacing:-0.078px;-webkit-text-stroke:0.1px #383838;">May 12 - 05:45 PM</div>
<div id="t61" style="position:absolute;left:328.70px;top:408.63px;font-size:8px;line-height:8px;font-weight:400;color:#383838;white-space:nowrap;letter-spacing:0.430px;-webkit-text-stroke:0.1px #383838;">10:00</div>
<div id="t62" style="position:absolute;left:395.20px;top:408.63px;font-size:8px;line-height:8px;font-weight:400;color:#383838;white-space:nowrap;letter-spacing:0.182px;-webkit-text-stroke:0.1px #383838;">2 session</div>
<div id="t63" style="position:absolute;left:462.20px;top:408.63px;font-size:8px;line-height:8px;font-weight:400;color:#383838;white-space:nowrap;letter-spacing:0.000px;-webkit-text-stroke:0.1px #383838;">3</div>
<div id="t64" style="position:absolute;left:531.50px;top:408.63px;font-size:8px;line-height:8px;font-weight:400;color:#555;white-space:nowrap;letter-spacing:0.925px;-webkit-text-stroke:0.1px #555;">--</div>
<div id="t65" style="position:absolute;left:598.00px;top:408.63px;font-size:8px;line-height:8px;font-weight:400;color:#555;white-space:nowrap;letter-spacing:0.925px;-webkit-text-stroke:0.1px #555;">--</div>
<div id="t66" style="position:absolute;left:664.50px;top:408.63px;font-size:8px;line-height:8px;font-weight:400;color:#383838;white-space:nowrap;letter-spacing:0.267px;-webkit-text-stroke:0.1px #383838;">Acme</div>
<div id="t67" style="position:absolute;left:730.80px;top:408.63px;font-size:8px;line-height:8px;font-weight:400;color:#383838;white-space:nowrap;letter-spacing:0.470px;-webkit-text-stroke:0.1px #383838;">Web</div>
<div id="t68" style="position:absolute;left:90.50px;top:434.95px;font-size:8.5px;line-height:8.5px;font-weight:400;color:#5050cc;white-space:nowrap;letter-spacing:0.018px;-webkit-text-stroke:0.220px #5050cc;">Play</div>
<div id="t69" style="position:absolute;left:140.00px;top:435.38px;font-size:8px;line-height:8px;font-weight:400;color:#333;white-space:nowrap;letter-spacing:0.115px;-webkit-text-stroke:0.220px #333;">Laura Andrews</div>
<div id="t70" style="position:absolute;left:235.80px;top:435.38px;font-size:8px;line-height:8px;font-weight:400;color:#383838;white-space:nowrap;letter-spacing:-0.078px;-webkit-text-stroke:0.1px #383838;">May 12 - 05:35 PM</div>
<div id="t71" style="position:absolute;left:328.70px;top:435.38px;font-size:8px;line-height:8px;font-weight:400;color:#383838;white-space:nowrap;letter-spacing:0.430px;-webkit-text-stroke:0.1px #383838;">10:05</div>
<div id="t72" style="position:absolute;left:395.20px;top:435.38px;font-size:8px;line-height:8px;font-weight:400;color:#383838;white-space:nowrap;letter-spacing:0.182px;-webkit-text-stroke:0.1px #383838;">2 session</div>
<div id="t73" style="position:absolute;left:462.20px;top:435.38px;font-size:8px;line-height:8px;font-weight:400;color:#383838;white-space:nowrap;letter-spacing:0.000px;-webkit-text-stroke:0.1px #383838;">3</div>
<div id="t74" style="position:absolute;left:531.50px;top:435.38px;font-size:8px;line-height:8px;font-weight:400;color:#555;white-space:nowrap;letter-spacing:0.925px;-webkit-text-stroke:0.1px #555;">--</div>
<div id="t75" style="position:absolute;left:598.00px;top:435.38px;font-size:8px;line-height:8px;font-weight:400;color:#555;white-space:nowrap;letter-spacing:0.925px;-webkit-text-stroke:0.1px #555;">--</div>
<div id="t76" style="position:absolute;left:664.50px;top:435.38px;font-size:8px;line-height:8px;font-weight:400;color:#383838;white-space:nowrap;letter-spacing:0.267px;-webkit-text-stroke:0.1px #383838;">Acme</div>
<div id="t77" style="position:absolute;left:730.80px;top:435.38px;font-size:8px;line-height:8px;font-weight:400;color:#383838;white-space:nowrap;letter-spacing:0.470px;-webkit-text-stroke:0.1px #383838;">Web</div>
<div id="t78" style="position:absolute;left:90.50px;top:461.70px;font-size:8.5px;line-height:8.5px;font-weight:400;color:#555;white-space:nowrap;letter-spacing:0.018px;-webkit-text-stroke:0.1px #555;">Play</div>
<div id="t79" style="position:absolute;left:140.00px;top:462.13px;font-size:8px;line-height:8px;font-weight:400;color:#333;white-space:nowrap;letter-spacing:0.259px;-webkit-text-stroke:0.220px #333;">Mark Connolly</div>
<div id="t80" style="position:absolute;left:235.80px;top:462.13px;font-size:8px;line-height:8px;font-weight:400;color:#383838;white-space:nowrap;letter-spacing:-0.078px;-webkit-text-stroke:0.1px #383838;">May 12 - 05:20 PM</div>
<div id="t81" style="position:absolute;left:328.70px;top:462.13px;font-size:8px;line-height:8px;font-weight:400;color:#383838;white-space:nowrap;letter-spacing:0.430px;-webkit-text-stroke:0.1px #383838;">08:20</div>
<div id="t82" style="position:absolute;left:395.20px;top:462.13px;font-size:8px;line-height:8px;font-weight:400;color:#383838;white-space:nowrap;letter-spacing:0.182px;-webkit-text-stroke:0.1px #383838;">1 session</div>
<div id="t83" style="position:absolute;left:462.20px;top:462.13px;font-size:8px;line-height:8px;font-weight:400;color:#383838;white-space:nowrap;letter-spacing:0.000px;-webkit-text-stroke:0.1px #383838;">3</div>
<div id="t84" style="position:absolute;left:531.50px;top:462.13px;font-size:8px;line-height:8px;font-weight:400;color:#555;white-space:nowrap;letter-spacing:0.925px;-webkit-text-stroke:0.1px #555;">--</div>
<div id="t85" style="position:absolute;left:598.00px;top:462.13px;font-size:8px;line-height:8px;font-weight:400;color:#555;white-space:nowrap;letter-spacing:0.925px;-webkit-text-stroke:0.1px #555;">--</div>
<div id="t86" style="position:absolute;left:664.50px;top:462.13px;font-size:8px;line-height:8px;font-weight:400;color:#383838;white-space:nowrap;letter-spacing:0.267px;-webkit-text-stroke:0.1px #383838;">Acme</div>
<div id="t87" style="position:absolute;left:730.80px;top:462.13px;font-size:8px;line-height:8px;font-weight:400;color:#383838;white-space:nowrap;letter-spacing:0.470px;-webkit-text-stroke:0.1px #383838;">Web</div>
<div id="t88" style="position:absolute;left:90.50px;top:488.45px;font-size:8.5px;line-height:8.5px;font-weight:400;color:#555;white-space:nowrap;letter-spacing:0.018px;-webkit-text-stroke:0.1px #555;">Play</div>
<div id="t89" style="position:absolute;left:140.00px;top:488.88px;font-size:8px;line-height:8px;font-weight:400;color:#333;white-space:nowrap;letter-spacing:0.058px;-webkit-text-stroke:0.220px #333;">Amy Pascal</div>
<div id="t90" style="position:absolute;left:235.80px;top:488.88px;font-size:8px;line-height:8px;font-weight:400;color:#383838;white-space:nowrap;letter-spacing:-0.078px;-webkit-text-stroke:0.1px #383838;">May 12 - 05:15 PM</div>
<div id="t91" style="position:absolute;left:328.70px;top:488.88px;font-size:8px;line-height:8px;font-weight:400;color:#383838;white-space:nowrap;letter-spacing:0.430px;-webkit-text-stroke:0.1px #383838;">06:15</div>
<div id="t92" style="position:absolute;left:395.20px;top:488.88px;font-size:8px;line-height:8px;font-weight:400;color:#383838;white-space:nowrap;letter-spacing:0.182px;-webkit-text-stroke:0.1px #383838;">1 session</div>
<div id="t93" style="position:absolute;left:462.20px;top:488.88px;font-size:8px;line-height:8px;font-weight:400;color:#383838;white-space:nowrap;letter-spacing:0.000px;-webkit-text-stroke:0.1px #383838;">3</div>
<div id="t94" style="position:absolute;left:531.50px;top:488.88px;font-size:8px;line-height:8px;font-weight:400;color:#555;white-space:nowrap;letter-spacing:0.925px;-webkit-text-stroke:0.1px #555;">--</div>
<div id="t95" style="position:absolute;left:598.00px;top:488.88px;font-size:8px;line-height:8px;font-weight:400;color:#555;white-space:nowrap;letter-spacing:0.925px;-webkit-text-stroke:0.1px #555;">--</div>
<div id="t96" style="position:absolute;left:664.50px;top:488.88px;font-size:8px;line-height:8px;font-weight:400;color:#383838;white-space:nowrap;letter-spacing:0.267px;-webkit-text-stroke:0.1px #383838;">Acme</div>
<div id="t97" style="position:absolute;left:730.80px;top:488.88px;font-size:8px;line-height:8px;font-weight:400;color:#383838;white-space:nowrap;letter-spacing:0.470px;-webkit-text-stroke:0.1px #383838;">Web</div>
<div id="t98" style="position:absolute;left:90.50px;top:515.20px;font-size:8.5px;line-height:8.5px;font-weight:400;color:#5050cc;white-space:nowrap;letter-spacing:0.018px;-webkit-text-stroke:0.220px #5050cc;">Play</div>
<div id="t99" style="position:absolute;left:140.00px;top:515.63px;font-size:8px;line-height:8px;font-weight:400;color:#333;white-space:nowrap;letter-spacing:0.096px;-webkit-text-stroke:0.220px #333;">Peter McKay</div>
<div id="t100" style="position:absolute;left:235.80px;top:515.63px;font-size:8px;line-height:8px;font-weight:400;color:#383838;white-space:nowrap;letter-spacing:-0.078px;-webkit-text-stroke:0.1px #383838;">May 12 - 03:25 PM</div>
<div id="t101" style="position:absolute;left:328.70px;top:515.63px;font-size:8px;line-height:8px;font-weight:400;color:#383838;white-space:nowrap;letter-spacing:0.430px;-webkit-text-stroke:0.1px #383838;">05:30</div>
<div id="t102" style="position:absolute;left:395.20px;top:515.63px;font-size:8px;line-height:8px;font-weight:400;color:#383838;white-space:nowrap;letter-spacing:0.182px;-webkit-text-stroke:0.1px #383838;">1 session</div>
<div id="t103" style="position:absolute;left:462.20px;top:515.63px;font-size:8px;line-height:8px;font-weight:400;color:#383838;white-space:nowrap;letter-spacing:0.000px;-webkit-text-stroke:0.1px #383838;">3</div>
<div id="t104" style="position:absolute;left:531.50px;top:515.63px;font-size:8px;line-height:8px;font-weight:400;color:#555;white-space:nowrap;letter-spacing:0.925px;-webkit-text-stroke:0.1px #555;">--</div>
<div id="t105" style="position:absolute;left:598.00px;top:515.63px;font-size:8px;line-height:8px;font-weight:400;color:#555;white-space:nowrap;letter-spacing:0.925px;-webkit-text-stroke:0.1px #555;">--</div>
<div id="t106" style="position:absolute;left:664.50px;top:515.63px;font-size:8px;line-height:8px;font-weight:400;color:#383838;white-space:nowrap;letter-spacing:0.267px;-webkit-text-stroke:0.1px #383838;">Acme</div>
<div id="t107" style="position:absolute;left:730.80px;top:515.63px;font-size:8px;line-height:8px;font-weight:400;color:#383838;white-space:nowrap;letter-spacing:0.470px;-webkit-text-stroke:0.1px #383838;">Web</div>
<div id="t108" style="position:absolute;left:90.50px;top:541.95px;font-size:8.5px;line-height:8.5px;font-weight:400;color:#5050cc;white-space:nowrap;letter-spacing:0.018px;-webkit-text-stroke:0.220px #5050cc;">Play</div>
<div id="t109" style="position:absolute;left:140.00px;top:542.38px;font-size:8px;line-height:8px;font-weight:400;color:#333;white-space:nowrap;letter-spacing:0.195px;-webkit-text-stroke:0.220px #333;">Hannah Donnelley</div>
<div id="t110" style="position:absolute;left:235.80px;top:542.38px;font-size:8px;line-height:8px;font-weight:400;color:#383838;white-space:nowrap;letter-spacing:-0.078px;-webkit-text-stroke:0.1px #383838;">May 12 - 02:10 PM</div>
<div id="t111" style="position:absolute;left:328.70px;top:542.38px;font-size:8px;line-height:8px;font-weight:400;color:#383838;white-space:nowrap;letter-spacing:0.430px;-webkit-text-stroke:0.1px #383838;">08:45</div>
<div id="t112" style="position:absolute;left:395.20px;top:542.38px;font-size:8px;line-height:8px;font-weight:400;color:#383838;white-space:nowrap;letter-spacing:0.182px;-webkit-text-stroke:0.1px #383838;">2 session</div>
<div id="t113" style="position:absolute;left:462.20px;top:542.38px;font-size:8px;line-height:8px;font-weight:400;color:#383838;white-space:nowrap;letter-spacing:0.000px;-webkit-text-stroke:0.1px #383838;">3</div>
<div id="t114" style="position:absolute;left:531.50px;top:542.38px;font-size:8px;line-height:8px;font-weight:400;color:#555;white-space:nowrap;letter-spacing:0.925px;-webkit-text-stroke:0.1px #555;">--</div>
<div id="t115" style="position:absolute;left:598.00px;top:542.38px;font-size:8px;line-height:8px;font-weight:400;color:#555;white-space:nowrap;letter-spacing:0.925px;-webkit-text-stroke:0.1px #555;">--</div>
<div id="t116" style="position:absolute;left:664.50px;top:542.38px;font-size:8px;line-height:8px;font-weight:400;color:#383838;white-space:nowrap;letter-spacing:0.267px;-webkit-text-stroke:0.1px #383838;">Acme</div>
<div id="t117" style="position:absolute;left:730.80px;top:542.38px;font-size:8px;line-height:8px;font-weight:400;color:#383838;white-space:nowrap;letter-spacing:0.470px;-webkit-text-stroke:0.1px #383838;">Web</div>
<div id="t118" style="position:absolute;left:90.50px;top:568.70px;font-size:8.5px;line-height:8.5px;font-weight:400;color:#5050cc;white-space:nowrap;letter-spacing:0.018px;-webkit-text-stroke:0.220px #5050cc;">Play</div>
<div id="t119" style="position:absolute;left:140.00px;top:569.13px;font-size:8px;line-height:8px;font-weight:400;color:#333;white-space:nowrap;letter-spacing:0.215px;-webkit-text-stroke:0.220px #333;">Jane Doe</div>
<div id="t120" style="position:absolute;left:235.80px;top:569.13px;font-size:8px;line-height:8px;font-weight:400;color:#383838;white-space:nowrap;letter-spacing:-0.078px;-webkit-text-stroke:0.1px #383838;">May 12 - 01:10 PM</div>
<div id="t121" style="position:absolute;left:328.70px;top:569.13px;font-size:8px;line-height:8px;font-weight:400;color:#383838;white-space:nowrap;letter-spacing:0.430px;-webkit-text-stroke:0.1px #383838;">04:45</div>
<div id="t122" style="position:absolute;left:395.20px;top:569.13px;font-size:8px;line-height:8px;font-weight:400;color:#383838;white-space:nowrap;letter-spacing:0.182px;-webkit-text-stroke:0.1px #383838;">2 session</div>
<div id="t123" style="position:absolute;left:462.20px;top:569.13px;font-size:8px;line-height:8px;font-weight:400;color:#383838;white-space:nowrap;letter-spacing:0.000px;-webkit-text-stroke:0.1px #383838;">3</div>
<div id="t124" style="position:absolute;left:531.50px;top:569.13px;font-size:8px;line-height:8px;font-weight:400;color:#555;white-space:nowrap;letter-spacing:0.925px;-webkit-text-stroke:0.1px #555;">--</div>
<div id="t125" style="position:absolute;left:598.00px;top:569.13px;font-size:8px;line-height:8px;font-weight:400;color:#555;white-space:nowrap;letter-spacing:0.925px;-webkit-text-stroke:0.1px #555;">--</div>
<div id="t126" style="position:absolute;left:664.50px;top:569.13px;font-size:8px;line-height:8px;font-weight:400;color:#383838;white-space:nowrap;letter-spacing:0.267px;-webkit-text-stroke:0.1px #383838;">Acme</div>
<div id="t127" style="position:absolute;left:730.80px;top:569.13px;font-size:8px;line-height:8px;font-weight:400;color:#383838;white-space:nowrap;letter-spacing:0.470px;-webkit-text-stroke:0.1px #383838;">Web</div>
</body></html>
